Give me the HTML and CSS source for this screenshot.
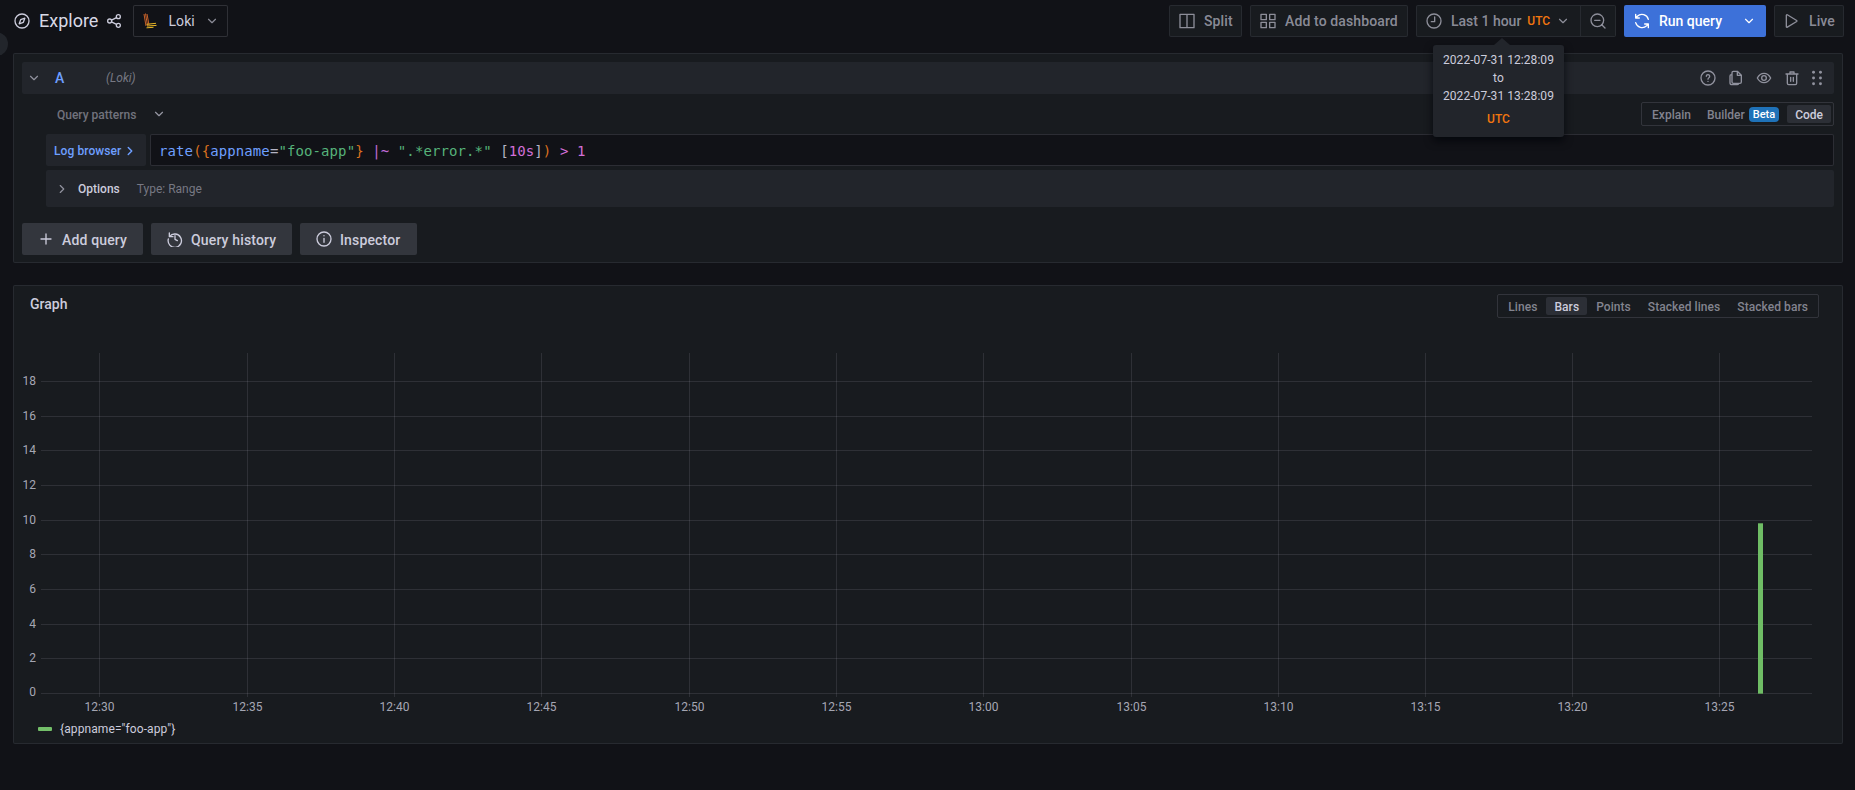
FILE: index.html
```html
<!DOCTYPE html>
<html lang="en">
<head>
<meta charset="utf-8">
<title>Explore - Grafana</title>
<link rel="stylesheet" href="styles.css">
</head>
<body>
<div class="menu-toggle"></div>
<div class="page">
  <header class="toolbar">
    <svg class="icon explore-icon" viewBox="0 0 24 24"><circle cx="12" cy="12" r="10.500"/><path d="M16.200 7.800l-2.200 6.200-6.200 2.200 2.200-6.200z"/></svg>
    <h1 class="title">Explore</h1>
    <svg class="icon share-icon" viewBox="0 0 24 24"><circle cx="5.500" cy="12" r="3"/><circle cx="18.500" cy="5.500" r="3"/><circle cx="18.500" cy="18.500" r="3"/><path d="M8.200 10.600l7.600-3.700M8.200 13.400l7.600 3.700"/></svg>
    <button class="tb-btn ds-btn">
      <svg class="loki" viewBox="0 0 14 16"><g class="loki-a"><path d="M1 1l2 12M2.500 .5l2 12M4 1l2 11"/></g><g class="loki-b"><path d="M3.500 11.300l9.500-1M4 13l9.500-.6M3.500 14.800l7 -.5"/></g></svg>
      <span class="ds-name">Loki</span>
      <svg class="icon chev ds-chev" viewBox="0 0 24 24"><path d="M6 9l6 6 6-6"/></svg>
    </button>
    <div class="toolbar-right">
      <button class="tb-btn split-btn"><svg class="icon" viewBox="0 0 24 24"><path d="M1.500 2h21v20h-21zM12 2v20"/></svg><span>Split</span></button>
      <button class="tb-btn add-btn"><svg class="icon" viewBox="0 0 24 24"><path d="M1.500 2h8v8h-8zM14.500 2h8v8h-8zM1.500 14h8v8h-8zM14.500 14h8v8h-8z"/></svg><span>Add to dashboard</span></button>
      <div class="time-group">
        <button class="tb-btn time-btn">
          <svg class="icon" viewBox="0 0 24 24"><circle cx="12" cy="12" r="10.500"/><path d="M13 6v7H8"/></svg>
          <span>Last 1 hour</span><span class="utc">UTC</span>
          <svg class="icon chev time-chev" viewBox="0 0 24 24"><path d="M6 9l6 6 6-6"/></svg>
        </button>
        <button class="tb-btn zoom-btn"><svg class="icon" viewBox="0 0 24 24"><circle cx="11" cy="11" r="9.500"/><path d="M7 11h8M18 18l4.500 4.500"/></svg></button>
        <div class="tooltip">
          <div>2022-07-31 12:28:09</div>
          <div>to</div>
          <div>2022-07-31 13:28:09</div>
          <div class="tooltip-utc">UTC</div>
        </div>
      </div>
      <div class="run-group">
        <svg class="icon run-icon" viewBox="0 0 24 24"><path d="M21.500 9.500A10 10 0 0 0 5 4.800L2.500 7.500M2.500 14.500A10 10 0 0 0 19 19.200l2.500-2.700M2.500 2v5.500H8M21.500 22v-5.500H16"/></svg>
        <span>Run query</span>
        <svg class="icon chev run-chev" viewBox="0 0 24 24"><path d="M6 9l6 6 6-6"/></svg>
      </div>
      <button class="tb-btn live-btn"><svg class="icon" viewBox="0 0 24 24"><path d="M5 3.500v17a1 1 0 0 0 1.500 .8l14-8.500a1 1 0 0 0 0-1.600l-14-8.500A1 1 0 0 0 5 3.500z"/></svg><span>Live</span></button>
    </div>
  </header>

  <section class="panel query-panel">
    <div class="query-header">
      <svg class="icon chev query-chev" viewBox="0 0 24 24"><path d="M6 9l6 6 6-6"/></svg>
      <span class="ref-id">A</span>
      <span class="ds-hint">(Loki)</span>
      <div class="query-actions">
        <svg class="icon" viewBox="0 0 24 24"><circle cx="12" cy="12" r="10.500"/><path d="M9.500 9.500a2.500 2.500 0 1 1 3.800 2.100c-.9.600-1.300 1.100-1.300 2.100M12 17v.1"/></svg>
        <svg class="icon" viewBox="0 0 24 24"><path d="M8 2h6l6 6v10a2 2 0 0 1-2 2H8a2 2 0 0 1-2-2V4a2 2 0 0 1 2-2zM14 2v6h6M6 7H5a2 2 0 0 0-2 2v10a3 3 0 0 0 3 3h8a2 2 0 0 0 2-2"/></svg>
        <svg class="icon" viewBox="0 0 24 24"><path d="M2 12c2.500-4.700 6-7 10-7s7.500 2.300 10 7c-2.500 4.700-6 7-10 7s-7.500-2.300-10-7z"/><circle cx="12" cy="12" r="3.500"/></svg>
        <svg class="icon" viewBox="0 0 24 24"><path d="M3 6h18M9 6V3h6v3M5 6v14a2 2 0 0 0 2 2h10a2 2 0 0 0 2-2V6M10 11v6M14 11v6"/></svg>
        <svg class="icon drag" viewBox="0 0 24 24"><circle cx="6.800" cy="3.500" r="2.200"/><circle cx="17.200" cy="3.500" r="2.200"/><circle cx="6.800" cy="12" r="2.200"/><circle cx="17.200" cy="12" r="2.200"/><circle cx="6.800" cy="20.500" r="2.200"/><circle cx="17.200" cy="20.500" r="2.200"/></svg>
      </div>
    </div>

    <div class="patterns-row">
      <span class="patterns">Query patterns</span>
      <svg class="icon chev patterns-chev" viewBox="0 0 24 24"><path d="M6 9l6 6 6-6"/></svg>
      <div class="toggle-group mode-group">
        <span class="toggle">Explain</span>
        <span class="toggle">Builder<b class="beta">Beta</b></span>
        <span class="toggle active">Code</span>
      </div>
    </div>

    <div class="editor-row">
      <button class="log-browser">Log browser<svg class="icon chev" viewBox="0 0 24 24"><path d="M9 6l6 6-6 6"/></svg></button>
      <div class="editor"><code class="c-fn">rate</code><code class="c-par">(</code><code class="c-par">{</code><code class="c-fn">appname</code><code class="c-op">=</code><code class="c-str">"foo-app"</code><code class="c-par">}</code><code> </code><code class="c-kw">|~</code><code> </code><code class="c-str">".*error.*"</code><code> </code><code class="c-op">[</code><code class="c-num">10s</code><code class="c-op">]</code><code class="c-par">)</code><code> </code><code class="c-num">&gt;</code><code> </code><code class="c-num">1</code></div>
    </div>

    <div class="options-row">
      <svg class="icon chev" viewBox="0 0 24 24"><path d="M9 6l6 6-6 6"/></svg>
      <span class="options-label">Options</span>
      <span class="options-type">Type: Range</span>
    </div>

    <div class="query-buttons">
      <button class="q-btn add-query"><svg class="icon" viewBox="0 0 24 24"><path d="M12 4.500v15M4.500 12h15"/></svg><span>Add query</span></button>
      <button class="q-btn history"><svg class="icon" viewBox="0 0 24 24"><path d="M3.500 3v5.500H9M3.700 8.500A10 10 0 1 1 2 12M12 7v5.500l3.500 2"/></svg><span>Query history</span></button>
      <button class="q-btn inspector"><svg class="icon" viewBox="0 0 24 24"><circle cx="12" cy="12" r="10.500"/><path d="M12 11v6M12 7v.1"/></svg><span>Inspector</span></button>
    </div>
  </section>

  <section class="panel graph-panel">
    <div class="graph-head">
      <h2 class="graph-title">Graph</h2>
      <div class="toggle-group chart-group">
        <span class="toggle">Lines</span>
        <span class="toggle active">Bars</span>
        <span class="toggle">Points</span>
        <span class="toggle">Stacked lines</span>
        <span class="toggle">Stacked bars</span>
      </div>
    </div>
    <svg class="chart" viewBox="14 325 1828 394">
      <g class="grid">
        <path d="M41 381.500H1812M41 416.500H1812M41 450.500H1812M41 485.500H1812M41 520.500H1812M41 554.500H1812M41 589.500H1812M41 624.500H1812M41 658.500H1812M41 693.500H1812"/>
        <path d="M99.500 353V697M247.500 353V697M394.500 353V697M541.500 353V697M689.500 353V697M836.500 353V697M983.500 353V697M1131.500 353V697M1278.500 353V697M1425.500 353V697M1572.500 353V697M1719.500 353V697"/>
      </g>
      <g class="y-labels">
        <text x="36" y="385">18</text><text x="36" y="420">16</text><text x="36" y="454">14</text><text x="36" y="489">12</text><text x="36" y="524">10</text><text x="36" y="558">8</text><text x="36" y="593">6</text><text x="36" y="628">4</text><text x="36" y="662">2</text><text x="36" y="696">0</text>
      </g>
      <g class="x-labels">
        <text x="99.500" y="711">12:30</text><text x="247.500" y="711">12:35</text><text x="394.500" y="711">12:40</text><text x="541.500" y="711">12:45</text><text x="689.500" y="711">12:50</text><text x="836.500" y="711">12:55</text><text x="983.500" y="711">13:00</text><text x="1131.500" y="711">13:05</text><text x="1278.500" y="711">13:10</text><text x="1425.500" y="711">13:15</text><text x="1572.500" y="711">13:20</text><text x="1719.500" y="711">13:25</text>
      </g>
      <rect class="bar" x="1758" y="523" width="5" height="171"/>
      <path class="bar-edge" d="M1758 523.500h5M1758 693.500h5"/>
    </svg>
    <div class="legend"><i class="swatch"></i><span>{appname="foo-app"}</span></div>
  </section>
</div>
</body>
</html>
```
FILE: styles.css
```css
* { box-sizing: border-box; }
html, body { margin: 0; height: 100%; }
body {
  background: #111217;
  color: #ccccdc;
  font-family: Roboto, "Liberation Sans", sans-serif;
  font-size: 14px;
  overflow: hidden;
  position: relative;
}
button { font: inherit; color: inherit; padding: 0; margin: 0; cursor: pointer; }
h1, h2 { margin: 0; font-weight: 500; }

.icon {
  width: 16px; height: 16px; flex: none;
  fill: none; stroke: currentColor; stroke-width: 2;
  stroke-linecap: round; stroke-linejoin: round;
  display: block;
}
.chev { width: 14px; height: 14px; }

.menu-toggle {
  position: absolute; left: -16px; top: 32px;
  width: 24px; height: 24px; border-radius: 50%;
  background: #22252b;
}

.page { padding: 0 11px 0 13px; }

/* toolbar */
.toolbar { display: flex; align-items: center; padding-top: 5px; height: 37px; }
.explore-icon { margin-left: 1px; color: #ccccdc; }
.title { font-size: 18px; font-weight: 400; margin-left: 9px; line-height: 32px; color: #d8d9e6; }
.share-icon { margin-left: 8px; color: #ccccdc; }
.tb-btn {
  height: 32px; display: flex; align-items: center;
  background: #181b1f; border: 1px solid rgba(204,204,220,.09);
  border-radius: 2px; color: rgba(204,204,220,.65); font-weight: 500;
  white-space: nowrap; letter-spacing: .12px;
}
.ds-btn { margin-left: 11px; width: 95px; padding-left: 9px; background: #111217; border-color: rgba(204,204,220,.16); color: #ccccdc; font-weight: 400; }
.loki { width: 14px; height: 16px; fill: none; stroke-width: 1; }
.loki-a { stroke: #c9622a; }
.loki-b { stroke: #e8b626; }
.ds-name { margin-left: 11px; }
.ds-chev { margin-left: 10px; color: rgba(204,204,220,.65); }
.toolbar-right { margin-left: auto; display: flex; align-items: center; gap: 8px; }
.split-btn { width: 73px; padding-left: 9px; gap: 9px; }
.add-btn { width: 158px; padding-left: 9px; gap: 9px; }
.time-group { display: flex; position: relative; }
.time-btn { width: 165px; padding-left: 9px; border-radius: 2px 0 0 2px; letter-spacing: 0; }
.time-btn span:first-of-type { margin-left: 9px; }
.utc { color: #f2760f; font-size: 12px; margin-left: 6px; }
.time-chev { margin-left: 6px; }
.zoom-btn { width: 35px; justify-content: center; border-left: 0; border-radius: 0 2px 2px 0; }
.run-group {
  width: 142px; height: 32px; display: flex; align-items: center;
  background: #3d71d9; color: #fff; font-weight: 500; border-radius: 2px; padding-left: 10px;
}
.run-group span { margin-left: 9px; }
.run-chev { margin-left: 20px; }
.live-btn { width: 70px; padding-left: 8px; gap: 10px; }

.tooltip {
  position: absolute; left: 17px; top: 40px; width: 131px; height: 92px; z-index: 5;
  background: #22252b; border-radius: 3px; padding-top: 6px;
  font-size: 12px; line-height: 18px; text-align: center; color: #ccccdc;
  letter-spacing: .06px;
  box-shadow: 0 4px 8px rgba(1,4,9,.75);
}
.tooltip::before {
  content: ""; position: absolute; left: 61px; top: -7px;
  border-left: 8px solid transparent; border-right: 8px solid transparent;
  border-bottom: 7px solid #22252b;
}
.tooltip-utc { color: #f2760f; font-weight: 500; margin-top: 5px; }

/* panels */
.panel {
  background: #181b1f; border: 1px solid rgba(204,204,220,.09);
  border-radius: 2px; margin-right: 1px;
}
.query-panel { margin-top: 16px; height: 210px; padding: 8px; }
.query-header {
  height: 32px; background: #22252b; border-radius: 2px;
  display: flex; align-items: center; padding-left: 5px;
}
.query-chev { color: rgba(204,204,220,.65); }
.ref-id { color: #6e9fff; font-weight: 500; margin-left: 14px; width: 51px; }
.ds-hint { font-size: 12px; font-style: italic; color: rgba(204,204,220,.5); }
.query-actions {
  margin-left: auto; display: flex; gap: 12px; padding-right: 9px;
  color: rgba(204,204,220,.65);
}
.drag { fill: currentColor; stroke: none; margin-left: -3px; }

.patterns-row { display: flex; align-items: center; height: 24px; margin-top: 8px; padding-left: 35px; }
.patterns { font-size: 12px; font-weight: 500; color: rgba(204,204,220,.5); padding-top: 1px; }
.patterns-chev { margin-left: 16px; color: rgba(204,204,220,.7); }

.toggle-group {
  display: flex; align-items: center; height: 24px; padding: 2px;
  border: 1px solid rgba(204,204,220,.15); border-radius: 2px;
  font-size: 12px; font-weight: 500; margin-left: auto; gap: 1px;
  letter-spacing: .06px;
}
.mode-group { gap: 0; letter-spacing: 0; }
.toggle {
  height: 18px; line-height: 18px; padding: 1px 8px 0; border-radius: 2px;
  color: rgba(204,204,220,.6); display: flex; align-items: center;
}
.toggle.active { background: #2c2f36; color: #ccccdc; }
.beta {
  background: #1f72b8; color: #fff; font-weight: 500; font-size: 11px;
  height: 15px; line-height: 15px; padding: 0 4px; border-radius: 4px; margin-left: 4px;
}

.editor-row { display: flex; gap: 4px; height: 32px; margin-top: 8px; padding-left: 24px; }
.log-browser {
  width: 100px; background: #22252b; border: 0; border-radius: 2px;
  color: #6e9fff; font-size: 12px; font-weight: 500; letter-spacing: .08px;
  display: flex; align-items: center; padding: 1px 0 0 8px; gap: 2px;
}
.log-browser .icon { width: 14px; height: 14px; stroke-width: 2.5; }
.editor {
  flex: 1; background: #111217; border: 1px solid rgba(204,204,220,.15);
  border-radius: 2px; padding-left: 8px; line-height: 32px; white-space: pre; overflow: hidden;
}
.editor code { font-family: "DejaVu Sans Mono", "Liberation Mono", monospace; font-size: 14px; color: #ccccdc; letter-spacing: .1px; }
.editor .c-fn { color: #6e9fff; }
.editor .c-par { color: #d9701f; }
.editor .c-op { color: #b4b4c4; }
.editor .c-str { color: #56b27a; }
.editor .c-kw { color: #c06bd8; }
.editor .c-num { color: #d36fd8; }

.options-row {
  display: flex; align-items: center; height: 37px; margin-top: 4px; margin-left: 24px;
  background: #22252b; border-radius: 2px; padding-left: 9px; font-size: 12px;
}
.options-row .icon { color: rgba(204,204,220,.65); }
.options-label { font-weight: 500; margin-left: 9px; }
.options-type { margin-left: 17px; color: rgba(204,204,220,.5); }

.query-buttons { display: flex; gap: 8px; margin-top: 16px; }
.q-btn {
  height: 32px; display: flex; align-items: center; gap: 8px;
  background: #33363d; border: 0; border-radius: 2px; font-weight: 500; color: #ccccdc;
  padding-left: 16px; letter-spacing: .15px;
}
.q-btn span { padding-top: 1px; }
.q-btn .icon { color: #ccccdc; }
.add-query { width: 121px; }
.history { width: 141px; }
.inspector { width: 117px; }

/* graph */
.graph-panel { margin-top: 22px; height: 459px; }
.graph-head { display: flex; padding: 8px 23px 7px 16px; }
.graph-title { font-size: 14px; line-height: 20px; color: #ccccdc; }
.chart { display: block; width: 1828px; height: 394px; }
.grid path { stroke: rgba(204,204,220,.12); stroke-width: 1; fill: none; }
.y-labels text, .x-labels text { font-size: 12px; font-family: Roboto, sans-serif; fill: rgba(204,204,220,.8); }
.y-labels { text-anchor: end; }
.x-labels { text-anchor: middle; }
.bar { fill: #6fbd65; }
.bar-edge { stroke: #558d4f; stroke-width: 1; fill: none; }
.legend {
  display: flex; align-items: center; height: 20px; padding-left: 24px;
  font-size: 12px; color: #ccccdc; letter-spacing: .1px;
}
.swatch { width: 14px; height: 4px; border-radius: 1px; background: #73bf69; margin-right: 8px; }
```
